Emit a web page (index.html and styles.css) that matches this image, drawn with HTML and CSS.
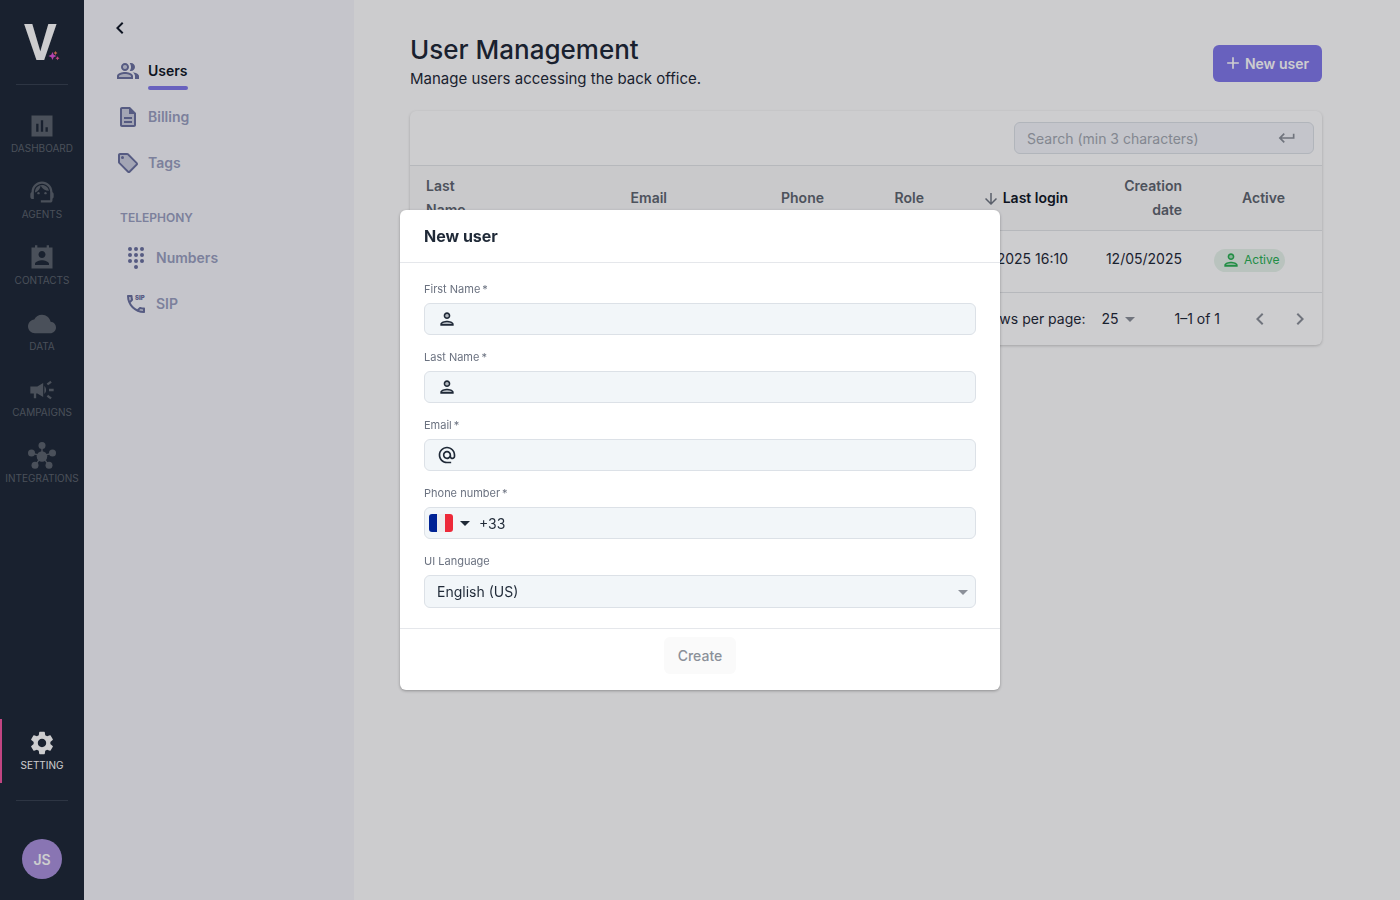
FILE: index.html
```html
<!DOCTYPE html>
<html lang="en">
<head>
  <meta charset="UTF-8">
  <meta name="viewport" content="width=device-width, initial-scale=1.0">
  <title>User Management</title>
  <link rel="stylesheet" href="styles.css">
</head>
<body>

<!-- shared icons -->
<svg class="sprite" aria-hidden="true">
  <symbol id="i-person" viewBox="0 0 24 24">
    <path opacity=".3" d="M12 16c-2.69 0-5.77 1.28-6 2h12c-.2-.71-3.3-2-6-2z"/>
    <circle cx="12" cy="8" r="2" opacity=".3"/>
    <path d="M12 12c2.21 0 4-1.79 4-4s-1.79-4-4-4-4 1.79-4 4 1.79 4 4 4zm0-6c1.1 0 2 .9 2 2s-.9 2-2 2-2-.9-2-2 .9-2 2-2zm0 8c-2.67 0-8 1.34-8 4v2h16v-2c0-2.66-5.33-4-8-4zm6 4H6c.22-.72 3.31-2 6-2 2.7 0 5.8 1.29 6 2z"/>
  </symbol>
  <symbol id="i-left" viewBox="0 0 24 24"><path d="M15.41 7.41L14 6l-6 6 6 6 1.41-1.41L10.83 12z"/></symbol>
  <symbol id="i-right" viewBox="0 0 24 24"><path d="M10 6L8.59 7.41 13.17 12l-4.58 4.59L10 18l6-6z"/></symbol>
  <symbol id="i-caret" viewBox="0 0 24 24"><path d="M7 10l5 5 5-5z"/></symbol>
</svg>

<div class="app">
  <nav class="rail">
    <a class="logo" href="#" aria-label="Home">
      <svg width="52" height="62" viewBox="0 -6 52 62">
        <text class="logo-letter" x="8" y="42">V</text>
        <path fill="#e052d6" d="M36.500 34l1.200 2.800 2.800 1.200-2.800 1.200-1.200 2.800-1.200-2.800-2.800-1.200 2.800-1.200z"/>
        <path fill="#f0805a" d="M39.500 33l.7 1.300 1.300.7-1.300.7-.7 1.300-.7-1.300-1.300-.7 1.300-.7z"/>
        <path fill="#f0559a" d="M41.500 38.300l.7 1.300 1.300.7-1.300.7-.7 1.300-.7-1.300-1.300-.7 1.300-.7z"/>
      </svg>
    </a>
    <hr>
    <a class="rail-item" href="#">
      <svg viewBox="0 0 24 24"><path d="M21 3H3v18h18V3zM9 17H7v-7h2v7zm4 0h-2V7h2v10zm4 0h-2v-4h2v4z"/></svg>
      <span>DASHBOARD</span>
    </a>
    <a class="rail-item" href="#">
      <svg viewBox="0 0 24 24"><path d="M21 12.220C21 6.730 16.740 3 12 3c-4.690 0-9 3.650-9 9.280-.6.34-1 .98-1 1.720v2c0 1.100.9 2 2 2h1v-6.100c0-3.870 3.130-7 7-7s7 3.130 7 7V19h-8v2h8c1.100 0 2-.9 2-2v-1.220c.59-.31 1-.92 1-1.640v-2.300c0-.7-.41-1.310-1-1.620z"/><circle cx="9" cy="13" r="1"/><circle cx="15" cy="13" r="1"/><path d="M18 11.030C17.520 8.180 15.040 6 12.050 6c-3.030 0-6.290 2.510-6.030 6.450 2.470-1.010 4.330-3.210 4.860-5.890 1.310 2.630 4 4.440 7.120 4.470z"/></svg>
      <span>AGENTS</span>
    </a>
    <a class="rail-item" href="#">
      <svg viewBox="0 0 24 24"><path d="M21 3h-3V1h-2v2H8V1H6v2H3v18h18V3zm-9 3c1.660 0 3 1.340 3 3s-1.340 3-3 3-3-1.340-3-3 1.340-3 3-3zm6 12H6v-1c0-2 4-3.100 6-3.100s6 1.100 6 3.100v1z"/></svg>
      <span>CONTACTS</span>
    </a>
    <a class="rail-item" href="#">
      <svg viewBox="0 0 24 24"><path d="M19.350 10.040C18.670 6.590 15.640 4 12 4 9.110 4 6.600 5.640 5.350 8.040 2.340 8.360 0 10.910 0 14c0 3.310 2.690 6 6 6h13c2.760 0 5-2.240 5-5 0-2.640-2.050-4.780-4.650-4.960z"/></svg>
      <span>DATA</span>
    </a>
    <a class="rail-item" href="#">
      <svg viewBox="0 0 24 24"><path d="M18 11v2h4v-2h-4zm-2 6.610c.96.71 2.210 1.650 3.200 2.390.4-.53.8-1.070 1.200-1.600-.99-.74-2.240-1.680-3.200-2.400-.4.54-.8 1.080-1.200 1.610zM20.400 5.600c-.4-.53-.8-1.070-1.200-1.600-.99.74-2.240 1.680-3.200 2.400.4.53.8 1.070 1.200 1.600.96-.72 2.210-1.650 3.200-2.400zM2 9v6h3v4h2v-4h1l5 3V6L8 9H2zm13.500 3c0-1.330-.58-2.530-1.500-3.350v6.690c.92-.81 1.500-2.010 1.500-3.340z"/></svg>
      <span>CAMPAIGNS</span>
    </a>
    <a class="rail-item" href="#">
      <svg viewBox="0 0 24 24"><path stroke="currentColor" stroke-width="1.200" d="M12 3v9L3 9.500M12 12l9-2.500M12 12l-6 8M12 12l6 8" fill="none"/><circle cx="12" cy="12.500" r="4.500"/><circle cx="12" cy="3" r="3"/><circle cx="3" cy="9.500" r="3"/><circle cx="21" cy="9.500" r="3"/><circle cx="6" cy="20" r="3"/><circle cx="18" cy="20" r="3"/></svg>
      <span>INTEGRATIONS</span>
    </a>
    <div class="spacer"></div>
    <a class="rail-item active" href="#">
      <svg viewBox="0 0 24 24"><path d="M19.140 12.940c.04-.3.06-.61.06-.94 0-.32-.02-.64-.07-.94l2.030-1.580c.18-.14.23-.41.12-.61l-1.920-3.320c-.12-.22-.37-.29-.59-.22l-2.390.96c-.5-.38-1.030-.7-1.620-.94l-.36-2.540c-.04-.24-.24-.41-.48-.41h-3.840c-.24 0-.43.17-.47.41l-.36 2.540c-.59.24-1.130.57-1.620.94l-2.390-.96c-.22-.08-.47 0-.59.22L2.740 8.870c-.12.21-.08.47.12.61l2.030 1.580c-.05.3-.09.63-.09.94s.02.64.07.94l-2.030 1.580c-.18.14-.23.41-.12.61l1.920 3.320c.12.22.37.29.59.22l2.390-.96c.5.38 1.030.7 1.620.94l.36 2.540c.05.24.24.41.48.41h3.840c.24 0 .44-.17.47-.41l.36-2.540c.59-.24 1.130-.56 1.620-.94l2.390.96c.22.08.47 0 .59-.22l1.920-3.320c.12-.22.07-.47-.12-.61l-2.010-1.580zM12 15.600c-1.980 0-3.600-1.620-3.600-3.600s1.620-3.600 3.600-3.600 3.600 1.620 3.600 3.600-1.620 3.600-3.600 3.600z"/></svg>
      <span>SETTING</span>
    </a>
    <hr>
    <button class="avatar" type="button">JS</button>
  </nav>

  <aside class="submenu">
    <button class="collapse" type="button" aria-label="Collapse menu"><svg><use href="#i-left"/></svg></button>
    <a class="sub-item current" href="#">
      <svg viewBox="0 0 24 24"><circle cx="9" cy="8" r="2" opacity=".3"/><path opacity=".3" d="M9 15c-2.700 0-5.800 1.290-6 2.010V18h12v-1c-.2-.71-3.300-2-6-2z"/><path d="M16.670 13.130C18.040 14.060 19 15.320 19 17v3h4v-3c0-2.180-3.570-3.470-6.330-3.870zM15 12c2.210 0 4-1.790 4-4s-1.790-4-4-4c-.47 0-.91.1-1.330.24C14.500 5.270 15 6.580 15 8s-.5 2.730-1.330 3.760c.42.14.86.24 1.330.24zM9 12c2.210 0 4-1.790 4-4s-1.790-4-4-4-4 1.790-4 4 1.790 4 4 4zm0-6c1.100 0 2 .9 2 2s-.9 2-2 2-2-.9-2-2 .9-2 2-2zM9 13c-2.670 0-8 1.340-8 4v3h16v-3c0-2.660-5.330-4-8-4zm6 5H3v-.99C3.200 16.290 6.300 15 9 15s5.800 1.290 6 2v1z"/></svg>
      <span>Users</span>
    </a>
    <a class="sub-item" href="#">
      <svg viewBox="0 0 24 24"><path opacity=".3" d="M13 4H6v16h12V9h-5V4zm3 14H8v-2h8v2zm0-6v2H8v-2h8z"/><path d="M8 16h8v2H8zm0-4h8v2H8zm6-10H6c-1.100 0-2 .9-2 2v16c0 1.100.89 2 1.990 2H18c1.100 0 2-.9 2-2V8l-6-6zm4 18H6V4h7v5h5v11z"/></svg>
      <span>Billing</span>
    </a>
    <a class="sub-item" href="#">
      <svg viewBox="0 0 24 24"><path opacity=".3" d="M11.170 4H4v7.170L12.830 20 20 12.830z"/><circle cx="6.500" cy="6.500" r="1.500"/><path d="M21.410 11.410l-8.830-8.830C12.210 2.210 11.700 2 11.170 2H4c-1.100 0-2 .9-2 2v7.170c0 .53.21 1.040.59 1.410l8.830 8.830c.78.78 2.050.78 2.830 0l7.170-7.170c.78-.78.78-2.040-.01-2.830zM12.830 20L4 11.170V4h7.170L20 12.830 12.830 20z"/></svg>
      <span>Tags</span>
    </a>
    <h2>TELEPHONY</h2>
    <a class="sub-item nested" href="#">
      <svg viewBox="0 0 24 24"><circle cx="6" cy="3" r="2"/><circle cx="12" cy="3" r="2"/><circle cx="18" cy="3" r="2"/><circle cx="6" cy="9" r="2"/><circle cx="12" cy="9" r="2"/><circle cx="18" cy="9" r="2"/><circle cx="6" cy="15" r="2"/><circle cx="12" cy="15" r="2"/><circle cx="18" cy="15" r="2"/><circle cx="12" cy="21" r="2"/></svg>
      <span>Numbers</span>
    </a>
    <a class="sub-item nested" href="#">
      <svg viewBox="0 0 24 24"><path opacity=".3" d="M5 5h1.500c.1.900.2 1.700.5 2.500L5.800 8.800C5.400 7.600 5.100 6.300 5 5zM15.200 18.200l1.200-1.200c.8.3 1.700.4 2.600.5v1.500c-1.300-.1-2.600-.4-3.800-.8z"/><path d="M20 15.500c-1.250 0-2.450-.2-3.570-.57-.35-.11-.74-.03-1.020.24l-2.200 2.200c-2.830-1.440-5.150-3.750-6.590-6.590l2.200-2.200c.28-.28.36-.67.25-1.020C8.700 6.450 8.500 5.250 8.500 4c0-.55-.45-1-1-1H4c-.55 0-1 .45-1 1 0 9.390 7.610 17 17 17 .55 0 1-.45 1-1v-3.500c0-.55-.45-1-1-1zM5.030 5h1.500c.07.89.22 1.760.46 2.590l-1.200 1.200c-.41-1.200-.67-2.470-.76-3.790zM19 18.970c-1.320-.09-2.600-.35-3.800-.75l1.200-1.200c.85.24 1.720.39 2.600.45v1.500z"/><text class="sip" x="11" y="8">SIP</text></svg>
      <span>SIP</span>
    </a>
  </aside>

  <main>
    <header class="page-head">
      <div>
        <h1>User Management</h1>
        <p>Manage users accessing the back office.</p>
      </div>
      <button class="btn-primary" type="button">
        <svg viewBox="0 0 24 24"><path d="M19 13h-6v6h-2v-6H5v-2h6V5h2v6h6v2z"/></svg>
        New user
      </button>
    </header>

    <section class="card">
      <div class="toolbar">
        <label class="search">
          <input type="text" placeholder="Search (min 3 characters)" aria-label="Search">
          <svg viewBox="0 0 24 24"><path d="M19 7v4H5.830l3.580-3.590L8 6l-6 6 6 6 1.410-1.410L5.830 13H21V7z"/></svg>
        </label>
      </div>
      <table>
        <colgroup>
          <col class="c-name"><col><col class="c-phone"><col class="c-role"><col class="c-login"><col class="c-date"><col class="c-active">
        </colgroup>
        <thead>
          <tr>
            <th class="left">Last Name</th>
            <th>Email</th>
            <th>Phone</th>
            <th>Role</th>
            <th class="sorted"><svg viewBox="0 0 24 24"><path d="M20 12l-1.410-1.410L13 16.170V4h-2v12.170l-5.580-5.590L4 12l8 8 8-8z"/></svg>Last login</th>
            <th>Creation date</th>
            <th>Active</th>
          </tr>
        </thead>
        <tbody>
          <tr>
            <td></td>
            <td></td>
            <td></td>
            <td></td>
            <td>12/05/2025 16:10</td>
            <td>12/05/2025</td>
            <td><span class="badge"><svg><use href="#i-person"/></svg>Active</span></td>
          </tr>
        </tbody>
      </table>
      <footer class="pager">
        <label for="rows">Rows per page:</label>
        <span class="rows">
          <select id="rows"><option>25</option><option>50</option></select>
          <svg><use href="#i-caret"/></svg>
        </span>
        <span class="range">1–1 of 1</span>
        <button type="button" aria-label="Previous page"><svg><use href="#i-left"/></svg></button>
        <button type="button" aria-label="Next page"><svg><use href="#i-right"/></svg></button>
      </footer>
    </section>
  </main>
</div>

<div class="backdrop">
  <form class="modal" role="dialog" aria-labelledby="modal-title">
    <h2 id="modal-title">New user</h2>
    <div class="fields">
      <div class="field">
        <label for="first">First Name&thinsp;*</label>
        <div class="control">
          <svg class="lead"><use href="#i-person"/></svg>
          <input id="first" type="text">
        </div>
      </div>
      <div class="field">
        <label for="last">Last Name&thinsp;*</label>
        <div class="control">
          <svg class="lead"><use href="#i-person"/></svg>
          <input id="last" type="text">
        </div>
      </div>
      <div class="field">
        <label for="email">Email&thinsp;*</label>
        <div class="control">
          <svg class="lead" viewBox="0 0 24 24"><path d="M12 1.950c-5.520 0-10 4.480-10 10s4.480 10 10 10h5v-2h-5c-4.340 0-8-3.660-8-8s3.660-8 8-8 8 3.660 8 8v1.430c0 .79-.71 1.570-1.500 1.570s-1.500-.78-1.500-1.570v-1.430c0-2.760-2.240-5-5-5s-5 2.240-5 5 2.240 5 5 5c1.380 0 2.640-.56 3.540-1.470.65.89 1.770 1.470 2.960 1.470 1.970 0 3.500-1.600 3.500-3.570v-1.430c0-5.520-4.480-10-10-10zm0 13c-1.660 0-3-1.340-3-3s1.340-3 3-3 3 1.340 3 3-1.340 3-3 3z"/></svg>
          <input id="email" type="email">
        </div>
      </div>
      <div class="field">
        <label for="phone">Phone number&thinsp;*</label>
        <div class="control phone">
          <button class="country" type="button" aria-label="France">
            <svg class="flag" viewBox="0 0 24 18"><path fill="#002395" d="M3 0h5v18H3a3 3 0 0 1-3-3V3a3 3 0 0 1 3-3z"/><path fill="#eee" d="M8 0h8v18H8z"/><path fill="#ed2939" d="M16 0h5a3 3 0 0 1 3 3v12a3 3 0 0 1-3 3h-5z"/></svg>
            <svg class="caret"><use href="#i-caret"/></svg>
          </button>
          <input id="phone" type="tel" value="+33">
        </div>
      </div>
      <div class="field">
        <label for="lang">UI Language</label>
        <div class="control select">
          <select id="lang"><option>English (US)</option><option>Français</option></select>
          <svg class="caret"><use href="#i-caret"/></svg>
        </div>
      </div>
    </div>
    <div class="actions">
      <button type="submit" disabled>Create</button>
    </div>
  </form>
</div>

</body>
</html>
```

FILE: styles.css
```css
* {
    box-sizing: border-box;
}
body {
    margin: 0;
    font-family: Inter, "Liberation Sans", sans-serif;
    font-size: 14px;
    color: #1f2937;
    background-color: #fefefe;
}
a {
    color: inherit;
    text-decoration: none;
}
button, input, select {
    font: inherit;
    color: inherit;
    border: 0;
    padding: 0;
    background: none;
    outline: none;
}
select {
    appearance: none;
}
svg {
    display: block;
    flex: none;
    fill: currentColor;
}
.sprite {
    position: absolute;
    width: 0;
    height: 0;
}
.app {
    display: flex;
    min-height: 100vh;
}

/* left rail */
.rail {
    width: 84px;
    flex: none;
    display: flex;
    flex-direction: column;
    background-color: #1f2937;
    color: #5c636d;
    padding: 12px 0 21px;
}
.rail hr {
    width: 52px;
    margin: 17px auto;
    border: 0;
    border-top: 1px solid #374151;
}
.rail .logo + hr {
    margin-top: 10px;
}
.logo {
    align-self: center;
}
.logo-letter {
    font: bold 50px Roboto, sans-serif;
    fill: #fff;
}
.rail-item {
    height: 64px;
    margin-bottom: 2px;
    padding: 10px 0;
    display: flex;
    flex-direction: column;
    align-items: center;
    font-size: 10px;
    line-height: 16px;
}
.rail-item svg {
    width: 28px;
    height: 28px;
}
.rail-item.active {
    color: #fff;
    border-left: 2px solid #f0559f;
    padding-right: 2px;
    margin-bottom: 0;
}
.spacer {
    flex: 1;
}
.avatar {
    width: 40px;
    height: 40px;
    margin: 21px auto 0;
    border-radius: 50%;
    background-color: #aa92dc;
    color: #fff;
    font-weight: 600;
}

/* settings submenu */
.submenu {
    width: 270px;
    flex: none;
    padding: 16px 24px 0;
    background-color: #f5f6fa;
}
.collapse {
    display: block;
    height: 24px;
    margin: 0 0 8px;
    color: #111827;
}
.collapse svg, .sub-item svg {
    width: 24px;
    height: 24px;
}
.sub-item {
    height: 46px;
    padding-left: 8px;
    display: flex;
    align-items: center;
    gap: 8px;
    line-height: 20px;
    font-weight: 600;
    color: #9a9fc0;
}
.sub-item svg {
    color: #6b719f;
}
.sub-item span {
    position: relative;
}
.current span {
    color: #111827;
}
.current span::after {
    content: "";
    position: absolute;
    left: 0;
    right: 0;
    bottom: -9px;
    height: 4px;
    border-radius: 2px;
    background-color: #8179ea;
}
.submenu h2 {
    margin: 0;
    padding: 24px 12px 9px;
    font-size: 12px;
    line-height: 16px;
    font-weight: 600;
    color: #9a9fc0;
}
.nested {
    padding-left: 16px;
}
.sip {
    font: 900 6px Inter, sans-serif;
}

/* main page */
main {
    flex: 1;
    min-width: 0;
    padding: 34px 78px 0 56px;
}
.page-head {
    display: flex;
    justify-content: space-between;
    align-items: center;
    margin-bottom: 19px;
}
h1 {
    margin: 0;
    font-size: 26px;
    line-height: 32px;
    font-weight: 500;
}
.page-head p {
    margin: 0;
    font-size: 15px;
    line-height: 26px;
}
.btn-primary {
    height: 37px;
    padding: 0 13px 0 10px;
    display: flex;
    align-items: center;
    gap: 2px;
    border-radius: 6px;
    background-color: #8179ea;
    color: #fff;
    font-weight: 600;
}
.btn-primary svg {
    width: 20px;
    height: 20px;
}
.card {
    background-color: #fff;
    border-radius: 6px;
    box-shadow: 0 1px 3px rgba(0, 0, 0, 0.2);
}
.toolbar {
    padding: 11px 8px;
    display: flex;
    justify-content: flex-end;
}
.search {
    width: 300px;
    height: 32px;
    padding: 0 16px 0 12px;
    display: flex;
    align-items: center;
    border: 1px solid #dce1e7;
    border-radius: 6px;
    background-color: #f4f6fa;
    color: #8b9099;
}
.search input {
    flex: 1;
    min-width: 0;
}
.search input::placeholder {
    color: #a3a8b1;
}
.search svg {
    width: 20px;
    height: 20px;
}
table {
    width: 100%;
    table-layout: fixed;
    border-collapse: collapse;
    text-align: right;
}
.c-name { width: 91px; }
.c-phone { width: 157px; }
.c-role { width: 100px; }
.c-login { width: 144px; }
.c-date { width: 114px; }
.c-active { width: 124px; }
th {
    padding: 8px 16px;
    line-height: 24px;
    font-weight: 600;
    color: #5f6670;
    background-color: #fafafb;
    text-align: right;
    border-top: 1px solid #e3e5e8;
    border-bottom: 1px solid #e3e5e8;
}
th.left {
    text-align: left;
}
th.sorted {
    color: #111827;
    white-space: nowrap;
}
th svg {
    display: inline-block;
    width: 18px;
    height: 18px;
    margin-right: 3px;
    vertical-align: middle;
    color: #6f7681;
}
td {
    height: 62px;
    padding: 16px 16px 0;
    line-height: 24px;
    vertical-align: top;
    white-space: nowrap;
    border-bottom: 1px solid #e3e5e8;
}
td:nth-child(5) {
    padding-left: 0;
}
th:last-child, td:last-child {
    padding-right: 37px;
}
.badge {
    height: 23px;
    padding: 0 6px 0 7px;
    display: inline-flex;
    align-items: center;
    gap: 3px;
    border-radius: 12px;
    background-color: #e6f3ea;
    color: #28b052;
    font-size: 12px;
    vertical-align: middle;
}
.badge svg {
    width: 20px;
    height: 20px;
}
.pager {
    height: 52px;
    padding-right: 2px;
    display: flex;
    align-items: center;
    justify-content: flex-end;
    line-height: 20px;
}
.rows {
    display: flex;
    align-items: center;
    margin: 0 32px 0 16px;
}
.rows svg {
    width: 24px;
    height: 24px;
    margin-left: -1px;
    color: #8b9099;
}
.range {
    margin-right: 20px;
}
.pager button {
    width: 40px;
    height: 40px;
    display: flex;
    align-items: center;
    justify-content: center;
    color: #8b9099;
}
.pager button svg {
    width: 24px;
    height: 24px;
}

/* modal */
.backdrop {
    position: fixed;
    inset: 0;
    display: flex;
    align-items: center;
    justify-content: center;
    background-color: rgba(5, 5, 15, 0.2);
}
.modal {
    width: 600px;
    max-width: 90%;
    background-color: #fff;
    border-radius: 6px;
    box-shadow: 0 1px 3px rgba(0, 0, 0, 0.3);
}
.modal h2 {
    margin: 0;
    padding: 14px 24px;
    font-size: 16px;
    line-height: 24px;
    font-weight: 700;
    border-bottom: 1px solid #e5e7eb;
}
.fields {
    padding: 16px 24px 20px;
    display: flex;
    flex-direction: column;
    gap: 12px;
}
.field {
    display: flex;
    flex-direction: column;
    gap: 4px;
}
.field label {
    font-size: 11px;
    line-height: 20px;
    color: #6b7280;
}
.control {
    height: 32px;
    padding: 0 12px;
    display: flex;
    align-items: center;
    gap: 8px;
    border: 1px solid #dce1e7;
    border-radius: 6px;
    background-color: #f2f6f9;
}
.control input, .control select {
    flex: 1;
    min-width: 0;
    align-self: stretch;
}
.lead {
    width: 20px;
    height: 20px;
}
.phone {
    padding-left: 4px;
    gap: 2px;
}
.country {
    display: flex;
    align-items: center;
}
.flag {
    width: 24px;
    height: 18px;
}
.caret {
    width: 24px;
    height: 24px;
}
.select {
    height: 33px;
    padding-right: 0;
}
.select .caret {
    color: #8b9099;
}
.actions {
    height: 62px;
    padding-top: 8px;
    text-align: center;
    border-top: 1px solid #e5e7eb;
}
.actions button {
    height: 37px;
    padding: 0 14px;
    border-radius: 6px;
    background-color: #fafafa;
    color: #8b9099;
    font-weight: 500;
}
```
